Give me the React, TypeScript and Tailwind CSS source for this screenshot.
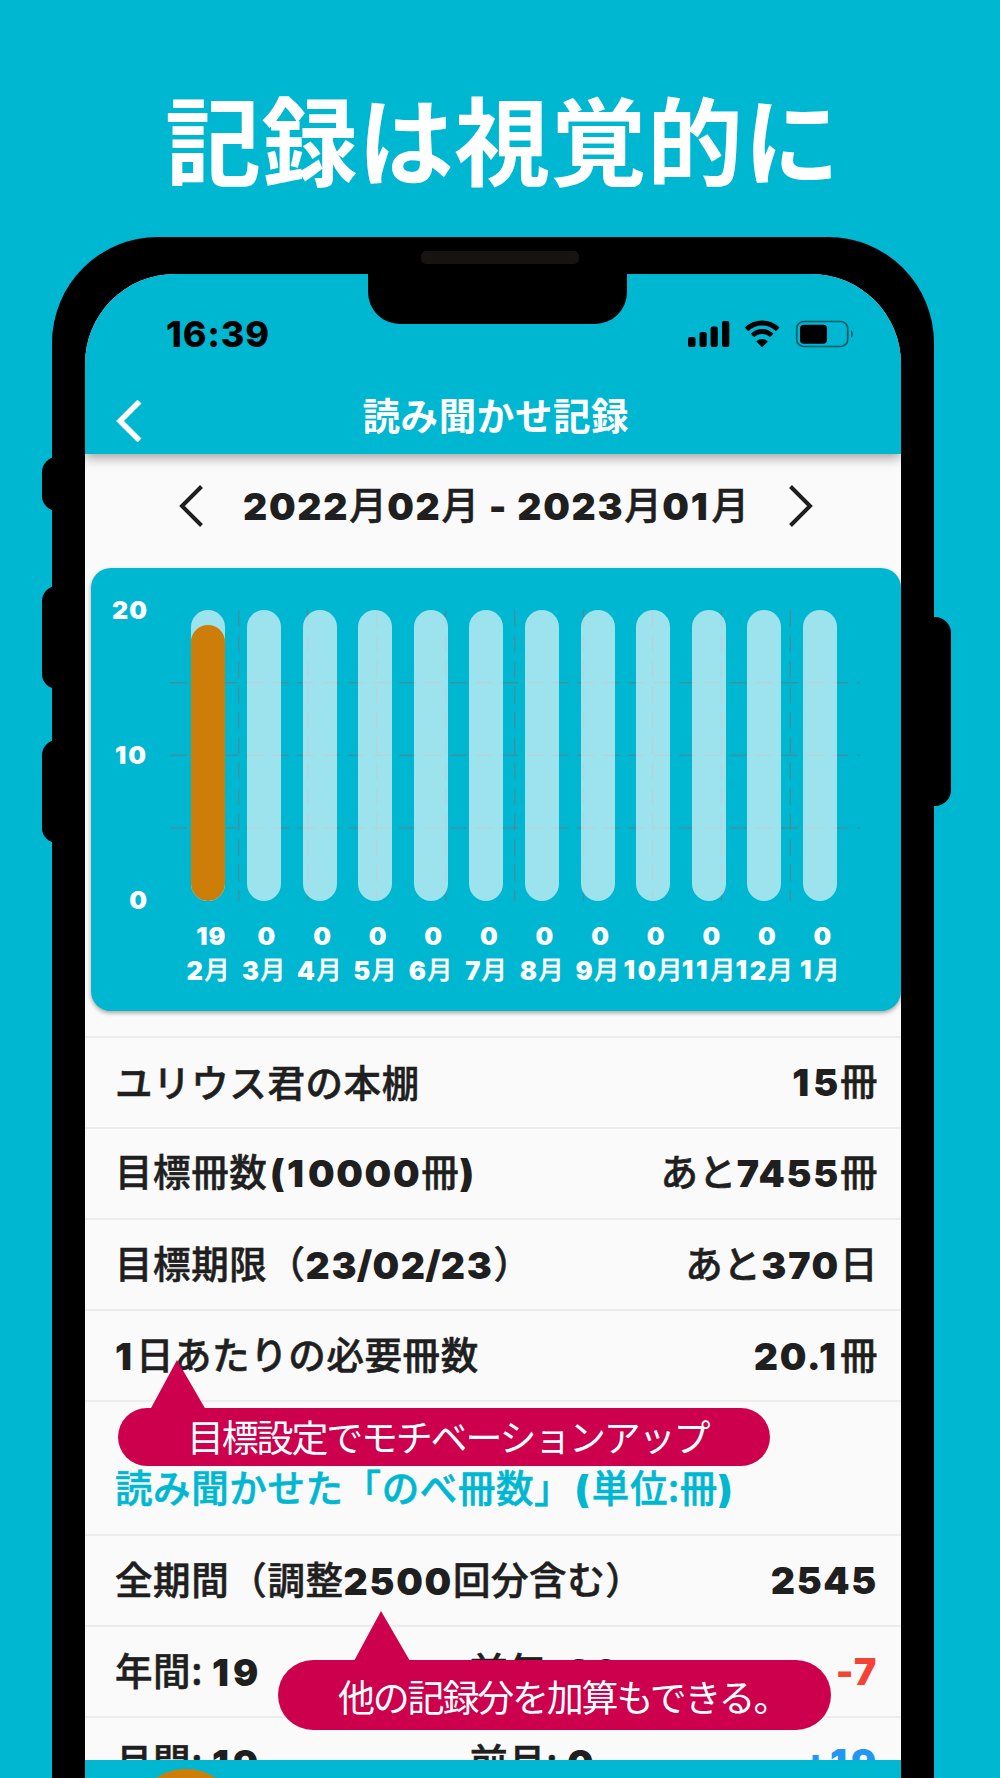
import React from "react";

const JP = "font-['Noto_Sans_CJK_JP',sans-serif]";

/* Side bearings for the narrow Latin glyphs. */
const BEARING: Record<string, string> = {
  "1": "mr-[0.06em]",
  "/": "-mx-[0.04em]",
  "(": "ml-[0.07em] mr-[0.02em]",
};

/* Latin runs are set in heavy Inter, everything else in the Japanese face. */
function Mixed({ text }: { text: string }) {
  const runs = text.split(/([1/(]|[02-9).+-]+)/).filter(Boolean);
  return (
    <>
      {runs.map((run, i) =>
        /^[0-9()/.+-]+$/.test(run) ? (
          <span key={i} className={`font-['Inter',sans-serif] font-black tracking-[0.045em] ${BEARING[run] ?? ""}`}>
            {run}
          </span>
        ) : (
          <span key={i} className="whitespace-pre align-[0.02em] [-webkit-text-stroke:0.015em_currentColor]">
            {run}
          </span>
        )
      )}
    </>
  );
}

function Chevron({ dir, className }: { dir: "left" | "right"; className: string }) {
  return (
    <svg viewBox="0 0 26 42" className={className} fill="none" stroke="currentColor">
      <path d={dir === "left" ? "M23.500 1.500 L4 21 L23.500 40.500" : "M2.500 1.500 L22 21 L2.500 40.500"} />
    </svg>
  );
}

function StatusIcons() {
  return (
    <svg width="168" height="30" viewBox="0 0 168 30" className="block">
      <rect x="1" y="17" width="7.500" height="10" rx="2" />
      <rect x="12.500" y="12" width="7.200" height="15" rx="2" />
      <rect x="23.600" y="6.500" width="7.200" height="20.500" rx="2" />
      <rect x="35" y="1" width="7.300" height="26" rx="2" />
      <g fill="none" stroke="#000" strokeWidth="5">
        <path d="M59.500 9.400 A22.200 22.200 0 0 1 90.700 9.400" />
        <path d="M65.500 15.600 A13.500 13.500 0 0 1 84.700 15.600" />
      </g>
      <path d="M75.100 27.300 L69.300 21.400 A8.400 8.400 0 0 1 80.900 21.400 Z" />
      <rect x="109.700" y="1.500" width="51" height="25" rx="7" fill="none" stroke="#000" strokeOpacity=".5" strokeWidth="1.700" />
      <rect x="113" y="4.700" width="27" height="19" rx="4" />
      <path d="M164 10 a5 5 0 0 1 0 8 Z" fillOpacity=".5" />
    </svg>
  );
}

const months = [
  { label: "2月", value: 19 },
  { label: "3月", value: 0 },
  { label: "4月", value: 0 },
  { label: "5月", value: 0 },
  { label: "6月", value: 0 },
  { label: "7月", value: 0 },
  { label: "8月", value: 0 },
  { label: "9月", value: 0 },
  { label: "10月", value: 0 },
  { label: "11月", value: 0 },
  { label: "12月", value: 0 },
  { label: "1月", value: 0 },
];

function Grid() {
  return (
    <svg className="absolute left-0 top-0" width="690" height="291" viewBox="0 0 690 291" stroke="#7b6f74" strokeOpacity=".6" strokeWidth="1.2" strokeDasharray="17 8.450">
      {[72.700, 145.300, 217.900].map((y) => (
        <line key={y} x1="0" x2="690" y1={y} y2={y} />
      ))}
      {[0, 1, 2, 3, 4, 5, 6, 7, 8].map((i) => (
        <line key={i} x1={68.800 + i * 68.950} x2={68.800 + i * 68.950} y1="0" y2="291" />
      ))}
    </svg>
  );
}

function Chart() {
  return (
    <section className="ml-[6px] mt-[13px] flex h-[443px] shrink-0 rounded-[20px] bg-[#00b7d1] pt-[42px] text-white shadow-[0_2px_4px_rgba(0,0,0,0.35)]">
      <div className="-mt-[19px] flex h-[328px] w-[57px] flex-col items-end justify-between text-[25px] leading-[38px] tracking-[1px]">
        <span className="font-['Inter',sans-serif] font-black">20</span>
        <span className="font-['Inter',sans-serif] font-black tracking-[2px]">10</span>
        <span className="font-['Inter',sans-serif] font-black">0</span>
      </div>
      <div className="relative ml-[22px] w-[690px]">
        <Grid />
        <div className="relative flex pl-[10.500px]">
          {months.map((m) => (
            <div key={m.label} className="flex w-[55.620px] shrink-0 flex-col items-center">
              <div className="flex h-[290.500px] w-[34px] items-end overflow-hidden rounded-full bg-white/[0.61]">
                <div className="w-full rounded-full bg-[#cc7e08]" style={{ height: `${(m.value / 20) * 100}%` }} />
              </div>
              <span className="mt-[19px] pl-[6px] font-['Inter',sans-serif] text-[25px] font-black leading-[32px] tracking-[1px]">{m.value}</span>
              <span className={`${JP} -mx-2 whitespace-nowrap text-[25.500px] font-medium leading-[32px] tracking-[0.300px]`}>
                <Mixed text={m.label} />
              </span>
            </div>
          ))}
        </div>
      </div>
    </section>
  );
}

function Row({ label, middle, value, tone = "" }: { label: string; middle?: string; value: string; tone?: string }) {
  return (
    <div className="flex h-[91.200px] shrink-0 items-center whitespace-nowrap border-t-2 border-[#ececec] pb-[2px] pl-[30px] pr-[23px]">
      <span className={middle ? "w-[355px]" : ""}>
        <Mixed text={label} />
      </span>
      {middle && (
        <span>
          <Mixed text={middle} />
        </span>
      )}
      <span className={`ml-auto ${tone}`}>
        <Mixed text={value} />
      </span>
    </div>
  );
}

function Pointer({ className }: { className: string }) {
  return (
    <svg viewBox="0 0 56 50" width="56" height="50" className={`absolute ${className}`}>
      <path d="M27 0 L56 50 H0 Z" fill="#cc004c" />
    </svg>
  );
}

export default function App() {
  return (
    <main className={`relative h-[1778px] w-[1000px] overflow-hidden bg-[#00b7d1] ${JP}`}>
      <h1 className="h-[237px] whitespace-nowrap pl-[165px] pt-[66px] text-[96px] font-bold leading-[142px] tracking-[0.400px] text-white">記録は視覚的に</h1>

      <div className="absolute left-[41.500px] top-[457px] h-[54px] w-[40px] rounded-[15px] bg-black" />
      <div className="absolute left-[41.500px] top-[586px] h-[103px] w-[40px] rounded-[15px] bg-black" />
      <div className="absolute left-[41.500px] top-[740px] h-[103px] w-[40px] rounded-[15px] bg-black" />
      <div className="absolute left-[910.500px] top-[617px] h-[189px] w-[40px] rounded-[16px] bg-black" />

      <div className="relative ml-[52px] h-[1541px] w-[882px] rounded-t-[106px] bg-black px-[33px] pt-[37px]">
        <div className="absolute left-[369px] top-[14px] h-[13px] w-[158px] rounded-[5px] bg-[#171311]" />
        <div className="absolute left-[315.500px] top-[36px] z-10 h-[51px] w-[259px] rounded-b-[32px] bg-black" />

        <div className="flex h-[1504px] flex-col overflow-hidden rounded-t-[90px] bg-[#fafafa] text-[37.500px] font-medium leading-[54px] tracking-[0.600px] text-[#1f1f1f]">
          <header className="relative z-[1] flex h-[179.500px] shrink-0 flex-col bg-[#00b7d1] shadow-[0_3px_12px_rgba(0,0,0,0.4)]">
            <div className="flex h-[88px] items-end justify-between pl-[81px] pr-[46px] text-black">
              <span className="pb-[2px] font-['Inter',sans-serif] text-[36px] font-extrabold leading-[52px] tracking-[0.800px]">16:39</span>
              <div className="pb-[12px]">
                <StatusIcons />
              </div>
            </div>
            <div className="flex h-[92px] items-center pl-[31px]">
              <Chevron dir="left" className="mt-[27px] h-[42px] w-[26px] stroke-[5.500px] text-white" />
              <span className="ml-[220.500px] mt-[12px] font-bold text-white">読み聞かせ記録</span>
            </div>
          </header>

          <div className="flex h-[101.500px] shrink-0 items-center whitespace-nowrap pl-[93px] pt-[4px]">
            <Chevron dir="left" className="h-[42px] w-[26px] stroke-[4px]" />
            <span className="-mt-[2px] ml-[39px] w-[520px]">
              <Mixed text="2022月02月 - 2023月01月" />
            </span>
            <Chevron dir="right" className="ml-[24.500px] h-[42px] w-[26px] stroke-[4px]" />
          </div>

          <Chart />

          <div className="mt-[24.500px] flex flex-col">
            <Row label="ユリウス君の本棚" value="15冊" />
            <Row label="目標冊数(10000冊)" value="あと7455冊" />
            <Row label="目標期限（23/02/23）" value="あと370日" />
            <Row label="1日あたりの必要冊数" value="20.1冊" />
            <div className="flex h-[133.700px] shrink-0 items-end whitespace-nowrap border-t-2 border-[#ececec] pb-[17px] pl-[30px] text-[#00b7d1]">
              <span>
                <Mixed text="読み聞かせた「のべ冊数」(単位:冊)" />
              </span>
            </div>
            <Row label="全期間（調整2500回分含む）" value="2545" />
            <Row label="年間: 19" middle="前年: 26" value="-7" tone="text-[#f44336]" />
            <Row label="月間: 19" middle="前月: 0" value="+19" tone="text-[#2196f3]" />
          </div>
        </div>

        <nav className="absolute bottom-0 left-[33px] h-[18px] w-[816px] overflow-hidden bg-[#00b7d1]">
          <div className="ml-[47px] mt-[9px] size-[108px] rounded-full bg-[#cc7e08]" />
        </nav>
      </div>

      <div className="absolute left-[118px] top-[1407.500px] flex h-[58px] w-[652px] items-center rounded-full bg-[#cc004c] pl-[69px]">
        <Pointer className="left-[32px] top-[-48px]" />
        <span className="-mt-[2px] whitespace-nowrap text-[37px] font-normal leading-[54px] tracking-[-2.200px] text-white">目標設定でモチベーションアップ</span>
      </div>
      <div className="absolute left-[278px] top-[1660px] flex h-[70px] w-[553px] items-center rounded-full bg-[#cc004c] pl-[60px] pt-[4px]">
        <Pointer className="left-[76px] top-[-49px]" />
        <span className="-mt-[2px] whitespace-nowrap text-[37px] font-normal leading-[54px] tracking-[-2.200px] text-white">他の記録分を加算もできる。</span>
      </div>
    </main>
  );
}
